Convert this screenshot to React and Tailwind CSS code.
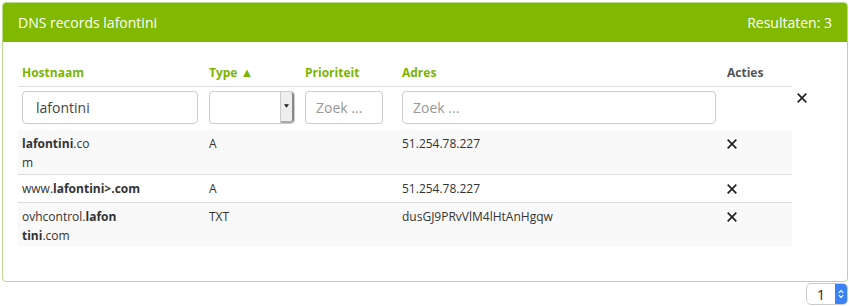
import React from 'react'

const rows = [
  { host: <><b>lafontini</b>.co<br />m</>, type: 'A', adres: '51.254.78.227', bg: 'bg-[#f9f9f9]', h: 'h-[45px]' },
  { host: <>www.<b>lafontini&gt;.com</b></>, type: 'A', adres: '51.254.78.227', bg: 'bg-white', h: 'h-[28px]' },
  { host: <>ovhcontrol.<b>lafon</b><br /><b>tini</b>.com</>, type: 'TXT', adres: 'dusGJ9PRvVlM4lHtAnHgqw', bg: 'bg-[#f9f9f9]', h: 'h-[44px]' },
]

function Cross({ className }) {
  return (
    <svg viewBox="0 0 10 10" className={className} fill="none" stroke="#222" strokeWidth="1.7">
      <path d="M0.7 0.7 L9.3 9.3 M9.3 0.7 L0.7 9.3" />
    </svg>
  )
}

export default function App() {
  return (
    <div className="w-[849px] h-[306px] bg-white font-['Open_Sans',sans-serif] text-[#333] pt-[2px] pl-[2px] pr-[1px]">
      <div className="border border-[#b8d98a] rounded-[4px] h-[280px]">
        <div className="bg-[#80b900] text-white h-[39px] flex items-center justify-between px-[15px] text-[14px] rounded-t-[3px]">
          <span>DNS records lafontini</span>
          <span>Resultaten: 3</span>
        </div>
        <div className="pl-[15px] pt-[22px] relative">
          <table className="table-fixed border-collapse w-[774px] text-[12px]">
            <colgroup>
              <col className="w-[187px]" />
              <col className="w-[96px]" />
              <col className="w-[97px]" />
              <col className="w-[325px]" />
              <col className="w-[69px]" />
            </colgroup>
            <thead>
              <tr className="border-b border-[#ddd] text-[12px] font-bold text-left">
                <th className="text-[#7ab400] px-[4px] h-[22px] align-top">Hostnaam</th>
                <th className="text-[#7ab400] px-[4px] align-top">Type <span className="text-[13px] leading-[16px]">▲</span></th>
                <th className="text-[#7ab400] px-[4px] align-top">Prioriteit</th>
                <th className="text-[#7ab400] px-[4px] align-top">Adres</th>
                <th className="text-[#555] px-[4px] align-top">Acties</th>
              </tr>
            </thead>
            <tbody>
              <tr>
                <td className="px-[4px] pt-[4px] pb-[6px]">
                  <div className="h-[33px] w-[176px] border border-[#ccc] rounded-[4px] flex items-center px-[13px] text-[14px] text-[#444]">lafontini</div>
                </td>
                <td className="px-[4px] pt-[4px] pb-[6px]">
                  <div className="h-[33px] w-[86px] border border-[#ccc] rounded-[4px] flex justify-end overflow-hidden">
                    <div className="w-[14px] bg-[#eee] border-l border-[#ccc] border-r-2 border-b-2 border-r-[#888] border-b-[#aaa] rounded-r-[3px] flex items-center justify-center">
                      <svg viewBox="0 0 6 4" className="w-[5px] h-[4px]"><path d="M0 0 H6 L3 4 Z" fill="#222" /></svg>
                    </div>
                  </div>
                </td>
                <td className="px-[4px] pt-[4px] pb-[6px]">
                  <div className="h-[33px] w-[78px] border border-[#ccc] rounded-[4px] flex items-center px-[10px] text-[14px] text-[#999]">Zoek ...</div>
                </td>
                <td className="px-[4px] pt-[4px] pb-[6px]">
                  <div className="h-[33px] w-[314px] border border-[#ccc] rounded-[4px] flex items-center px-[10px] text-[14px] text-[#999]">Zoek ...</div>
                </td>
                <td className="px-[4px] pt-[4px] pb-[6px] align-top relative">
                  <Cross className="absolute left-[74px] top-[6px] w-[10px] h-[10px]" />
                </td>
              </tr>
              {rows.map((r, i) => (
                <tr key={i} className={`${r.bg} ${r.h} ${i > 0 ? 'border-t border-[#ddd]' : ''}`}>
                  <td className="px-[4px] pt-[4px] pb-0 align-top leading-[19px]">{r.host}</td>
                  <td className="px-[4px] pt-[4px] pb-0 align-top leading-[19px]">{r.type}</td>
                  <td className="px-[4px] pt-[4px] pb-0 align-top leading-[19px]"></td>
                  <td className="px-[4px] pt-[4px] pb-0 align-top leading-[19px]">{r.adres}</td>
                  <td className="px-[4px] pt-[9px] pb-0 align-top">
                    <Cross className="w-[10px] h-[10px]" />
                  </td>
                </tr>
              ))}
            </tbody>
          </table>
        </div>
      </div>
      <div className="flex justify-end mt-[1px]">
        <div className="w-[42px] h-[22px] border border-[#ccc] rounded-[5px] flex overflow-hidden text-[14px] text-[#222]">
          <div className="flex-1 flex items-center pl-[10px]">1</div>
          <div className="w-[12px] bg-[#3b82f6] flex items-center justify-center">
            <svg viewBox="0 0 8 12" className="w-[6px] h-[10px]" fill="none" stroke="white" strokeWidth="1.5">
              <path d="M1 4.5 L4 1.5 L7 4.5 M1 7.5 L4 10.5 L7 7.5" />
            </svg>
          </div>
        </div>
      </div>
    </div>
  )
}
